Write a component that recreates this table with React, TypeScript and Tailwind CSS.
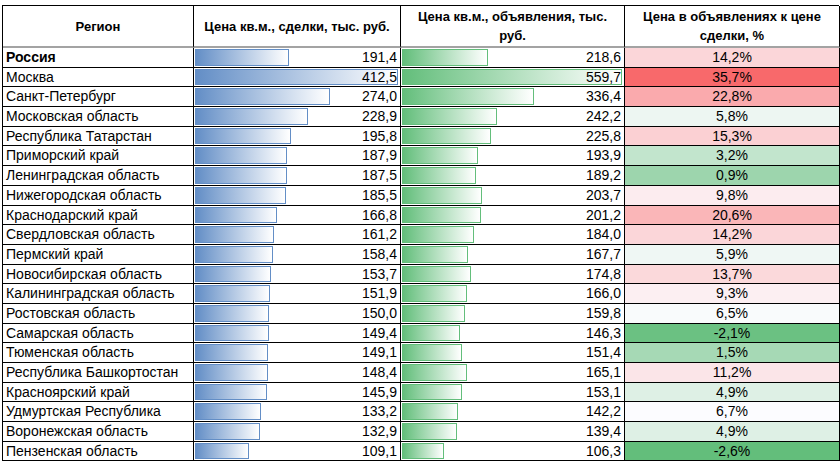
import React from "react";

type Row = { region: string; deal: number; ad: number; pct: number; bold?: boolean };

const rows: Row[] = [
  { region: "Россия", deal: 191.4, ad: 218.6, pct: 14.2, bold: true },
  { region: "Москва", deal: 412.5, ad: 559.7, pct: 35.7 },
  { region: "Санкт-Петербург", deal: 274.0, ad: 336.4, pct: 22.8 },
  { region: "Московская область", deal: 228.9, ad: 242.2, pct: 5.8 },
  { region: "Республика Татарстан", deal: 195.8, ad: 225.8, pct: 15.3 },
  { region: "Приморский край", deal: 187.9, ad: 193.9, pct: 3.2 },
  { region: "Ленинградская область", deal: 187.5, ad: 189.2, pct: 0.9 },
  { region: "Нижегородская область", deal: 185.5, ad: 203.7, pct: 9.8 },
  { region: "Краснодарский край", deal: 166.8, ad: 201.2, pct: 20.6 },
  { region: "Свердловская область", deal: 161.2, ad: 184.0, pct: 14.2 },
  { region: "Пермский край", deal: 158.4, ad: 167.7, pct: 5.9 },
  { region: "Новосибирская область", deal: 153.7, ad: 174.8, pct: 13.7 },
  { region: "Калининградская область", deal: 151.9, ad: 166.0, pct: 9.3 },
  { region: "Ростовская область", deal: 150.0, ad: 159.8, pct: 6.5 },
  { region: "Самарская область", deal: 149.4, ad: 146.3, pct: -2.1 },
  { region: "Тюменская область", deal: 149.1, ad: 151.4, pct: 1.5 },
  { region: "Республика Башкортостан", deal: 148.4, ad: 165.1, pct: 11.2 },
  { region: "Красноярский край", deal: 145.9, ad: 153.1, pct: 4.9 },
  { region: "Удмуртская Республика", deal: 133.2, ad: 142.2, pct: 6.7 },
  { region: "Воронежская область", deal: 132.9, ad: 139.4, pct: 4.9 },
  { region: "Пензенская область", deal: 109.1, ad: 106.3, pct: -2.6 },
];

const maxDeal = Math.max(...rows.map((r) => r.deal));
const maxAd = Math.max(...rows.map((r) => r.ad));
const pcts = rows.map((r) => r.pct);
const minPct = Math.min(...pcts);
const maxPct = Math.max(...pcts);
const medPct = [...pcts].sort((a, b) => a - b)[Math.floor(pcts.length / 2)];

const fmt = (n: number, d = 1) => n.toFixed(d).replace(".", ",");

function mix(a: number[], b: number[], t: number) {
  const c = a.map((x, i) => Math.round(x + (b[i] - x) * t));
  return `rgb(${c[0]}, ${c[1]}, ${c[2]})`;
}

// Excel 3-color scale: green (min) -> white (median) -> red (max)
function scaleColor(v: number) {
  const green = [99, 190, 123];
  const white = [252, 252, 255];
  const red = [248, 105, 107];
  if (v <= medPct) return mix(green, white, (v - minPct) / (medPct - minPct));
  return mix(white, red, (v - medPct) / (maxPct - medPct));
}

function BarCell({ value, max, color }: { value: number; max: number; color: string }) {
  return (
    <div className="relative border-r border-b border-black">
      <div className="absolute top-[1px] bottom-[1px] left-[1px] right-[2px]">
        <div
          className="h-full border"
          style={{
            width: `${(value / max) * 100}%`,
            borderColor: color,
            background: `linear-gradient(to right, ${color}, #ffffff)`,
          }}
        />
      </div>
      <div className="relative pr-[3px] text-right leading-[19px]">{fmt(value)}</div>
    </div>
  );
}

const head =
  "flex items-center justify-center border-r border-b-2 border-r-black border-b-[#a3a3a3] text-center text-[13px] font-bold leading-[19px] whitespace-nowrap";

export default function App() {
  return (
    <div className="h-[463px] w-[840px] bg-white pl-[2px] pt-[5px] font-['Liberation_Sans',_'Noto_Sans',_sans-serif] text-[14px] text-black">
      <div className="grid w-[837px] grid-cols-[191px_207px_224px_215px] grid-rows-[42px_repeat(21,19.7px)] border-t border-l border-black">
        <div className={head}>Регион</div>
        <div className={head}>Цена кв.м., сделки, тыс. руб.</div>
        <div className={head}>
          Цена кв.м., объявления, тыс.
          <br />
          руб.
        </div>
        <div className={head}>
          Цена в объявлениях к цене
          <br />
          сделки, %
        </div>
        {rows.map((r) => (
          <React.Fragment key={r.region}>
            <div className={`border-r border-b border-black pl-[3px] leading-[19px] whitespace-nowrap ${r.bold ? "font-bold" : ""}`}>
              {r.region}
            </div>
            <BarCell value={r.deal} max={maxDeal} color="#638ec6" />
            <BarCell value={r.ad} max={maxAd} color="#63be7b" />
            <div
              className="border-r border-b border-black text-center leading-[19px]"
              style={{ backgroundColor: scaleColor(r.pct) }}
            >
              {fmt(r.pct)}%
            </div>
          </React.Fragment>
        ))}
      </div>
    </div>
  );
}
